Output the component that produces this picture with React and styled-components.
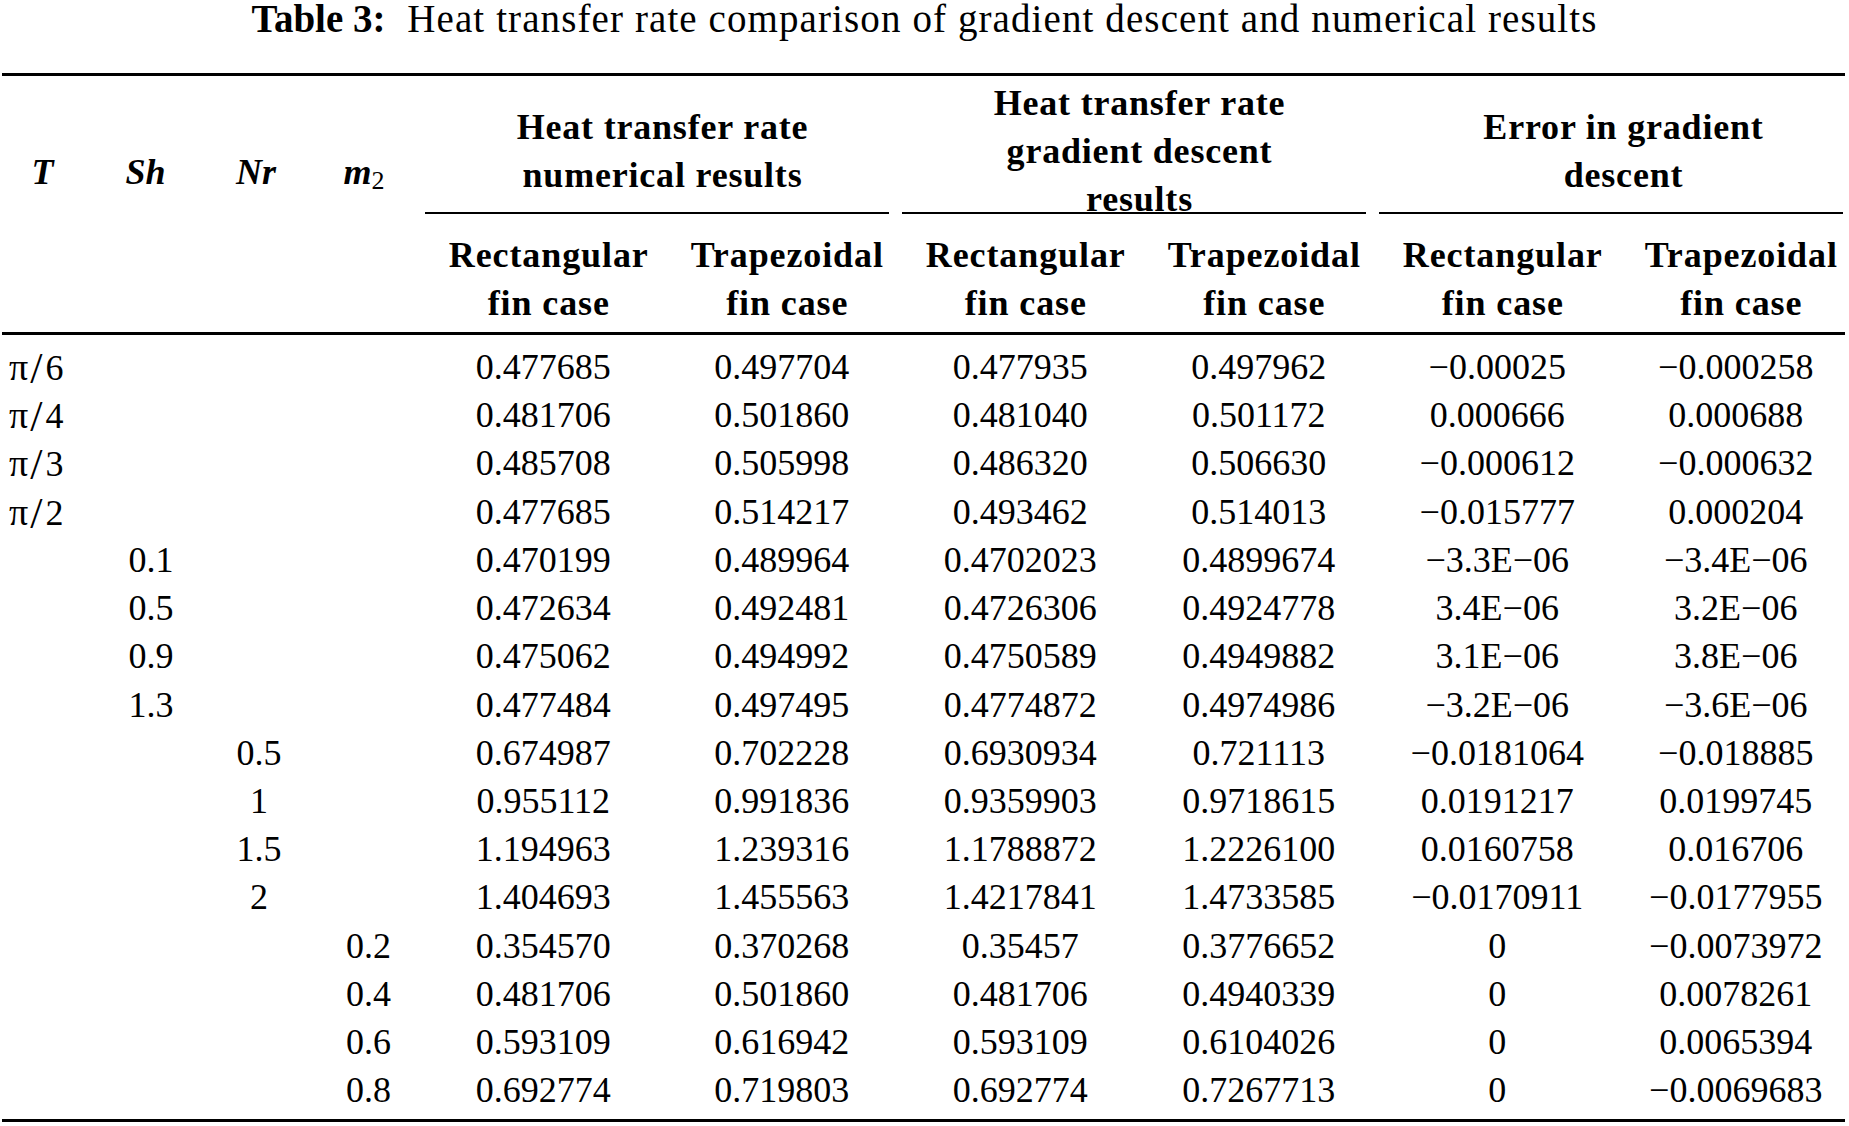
import React from "react";
import styled, { createGlobalStyle } from "styled-components";

const GlobalStyle = createGlobalStyle`
  html, body {
    margin: 0;
    padding: 0;
    background: #ffffff;
    overflow: hidden;
  }
  body {
    font-family: "Liberation Serif", "DejaVu Serif", serif;
    color: #000000;
  }
`;

const COLS = "95px 108px 108px 111px repeat(6, 238.5px)";

const Page = styled.div`
  width: 1849px;
  font-size: 36px;
`;

const Caption = styled.div`
  text-align: center;
  font-size: 39px;
  line-height: 38px;
  margin-bottom: 35px;
  white-space: nowrap;
`;

const CaptionLabel = styled.b`
  font-weight: 700;
  margin-right: 12px;
`;

const CaptionText = styled.span`
  letter-spacing: 1.1px;
`;

const Table = styled.div`
  margin-left: 2px;
  width: 1843px;
  border-top: 3px solid #000;
  border-bottom: 3px solid #000;
`;

const Header = styled.div`
  display: grid;
  grid-template-columns: ${COLS};
  grid-template-rows: 138px 118px;
  border-bottom: 3px solid #000;
  font-weight: 700;
  line-height: 48px;
`;

const ParamHead = styled.div`
  grid-row: 1 / span 2;
  padding-top: 72px;
  padding-right: ${(p) => p.$pr || 0}px;
  text-align: center;
  font-style: italic;
  white-space: nowrap;

  sub {
    font-style: normal;
    font-weight: 400;
    font-size: 26px;
    vertical-align: -5px;
    line-height: 0;
  }
`;

const GroupHead = styled.div`
  grid-column: span 2;
  box-sizing: border-box;
  height: 138px;
  margin: 0 12px 0 1px;
  padding-top: 14px;
  padding-left: ${(p) => 11 + (p.$dx || 0) * 2}px;
  border-bottom: 2px solid #000;
  display: flex;
  flex-direction: column;
  justify-content: center;
  align-items: center;
  text-align: center;
  white-space: nowrap;
  letter-spacing: 0.8px;
`;

const SubHead = styled.div`
  grid-row: 2;
  padding-top: 17px;
  padding-left: 11px;
  text-align: center;
  white-space: nowrap;
  letter-spacing: 0.9px;
`;

const Body = styled.div`
  padding-top: 8px;
  padding-bottom: 4px;
`;

const Row = styled.div`
  display: grid;
  grid-template-columns: ${COLS};
  height: 48.23px;
  line-height: 48.23px;
`;

const Cell = styled.div`
  text-align: ${(p) => (p.$left ? "left" : "center")};
  padding-left: ${(p) => (p.$left ? 7 : 0)}px;
  white-space: nowrap;
`;

const Slash = styled.span`
  display: inline-block;
  font-size: 44px;
  line-height: 0;
  margin: 0 3px 0 2px;
  transform: translateY(3px);
`;

const Pi = styled.span`
  font-size: 38px;
`;

const M = "\u2212";

const angle = (d) => (
  <>
    <Pi>π</Pi>
    <Slash>/</Slash>
    {d}
  </>
);

const rows = [
  [angle(6), "", "", "", "0.477685", "0.497704", "0.477935", "0.497962", `${M}0.00025`, `${M}0.000258`],
  [angle(4), "", "", "", "0.481706", "0.501860", "0.481040", "0.501172", "0.000666", "0.000688"],
  [angle(3), "", "", "", "0.485708", "0.505998", "0.486320", "0.506630", `${M}0.000612`, `${M}0.000632`],
  [angle(2), "", "", "", "0.477685", "0.514217", "0.493462", "0.514013", `${M}0.015777`, "0.000204"],
  ["", "0.1", "", "", "0.470199", "0.489964", "0.4702023", "0.4899674", `${M}3.3E${M}06`, `${M}3.4E${M}06`],
  ["", "0.5", "", "", "0.472634", "0.492481", "0.4726306", "0.4924778", `3.4E${M}06`, `3.2E${M}06`],
  ["", "0.9", "", "", "0.475062", "0.494992", "0.4750589", "0.4949882", `3.1E${M}06`, `3.8E${M}06`],
  ["", "1.3", "", "", "0.477484", "0.497495", "0.4774872", "0.4974986", `${M}3.2E${M}06`, `${M}3.6E${M}06`],
  ["", "", "0.5", "", "0.674987", "0.702228", "0.6930934", "0.721113", `${M}0.0181064`, `${M}0.018885`],
  ["", "", "1", "", "0.955112", "0.991836", "0.9359903", "0.9718615", "0.0191217", "0.0199745"],
  ["", "", "1.5", "", "1.194963", "1.239316", "1.1788872", "1.2226100", "0.0160758", "0.016706"],
  ["", "", "2", "", "1.404693", "1.455563", "1.4217841", "1.4733585", `${M}0.0170911`, `${M}0.0177955`],
  ["", "", "", "0.2", "0.354570", "0.370268", "0.35457", "0.3776652", "0", `${M}0.0073972`],
  ["", "", "", "0.4", "0.481706", "0.501860", "0.481706", "0.4940339", "0", "0.0078261"],
  ["", "", "", "0.6", "0.593109", "0.616942", "0.593109", "0.6104026", "0", "0.0065394"],
  ["", "", "", "0.8", "0.692774", "0.719803", "0.692774", "0.7267713", "0", `${M}0.0069683`],
];

const groups = [
  { lines: ["Heat transfer rate", "numerical results"], dx: 0 },
  { lines: ["Heat transfer rate", "gradient descent", "results"], dx: 0 },
  { lines: ["Error in gradient", "descent"], dx: 7 },
];

export default function App() {
  return (
    <>
      <GlobalStyle />
      <Page>
        <Caption>
          <CaptionLabel>Table 3:</CaptionLabel>{" "}
          <CaptionText>Heat transfer rate comparison of gradient descent and numerical results</CaptionText>
        </Caption>
        <Table>
          <Header>
            <ParamHead $pr={14}>T</ParamHead>
            <ParamHead $pr={11}>Sh</ParamHead>
            <ParamHead $pr={6}>Nr</ParamHead>
            <ParamHead $pr={9}>
              m<sub>2</sub>
            </ParamHead>
            {groups.map((g, i) => (
              <GroupHead key={i} $dx={g.dx}>
                {g.lines.map((l, j) => (
                  <div key={j}>{l}</div>
                ))}
              </GroupHead>
            ))}
            {[0, 1, 2].map((i) => (
              <React.Fragment key={i}>
                <SubHead>
                  Rectangular
                  <br />
                  fin case
                </SubHead>
                <SubHead>
                  Trapezoidal
                  <br />
                  fin case
                </SubHead>
              </React.Fragment>
            ))}
          </Header>
          <Body>
            {rows.map((r, i) => (
              <Row key={i}>
                {r.map((v, j) => (
                  <Cell key={j} $left={j === 0}>
                    {v}
                  </Cell>
                ))}
              </Row>
            ))}
          </Body>
        </Table>
      </Page>
    </>
  );
}
